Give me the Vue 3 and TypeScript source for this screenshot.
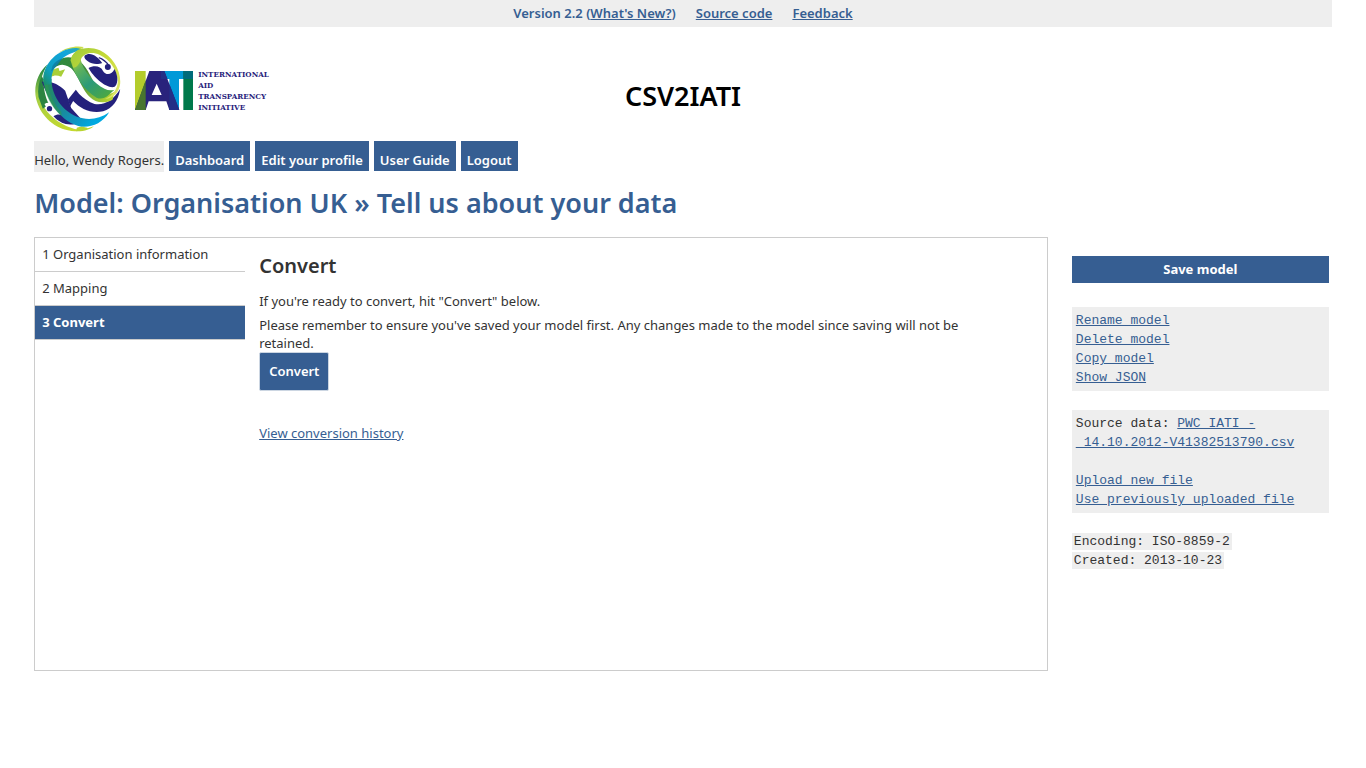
<script setup lang="ts">
interface Link {
  label: string
  href: string
}

const menu: Link[] = [
  { label: 'Dashboard', href: '#dashboard' },
  { label: 'Edit your profile', href: '#profile' },
  { label: 'User Guide', href: '#guide' },
  { label: 'Logout', href: '#logout' },
]

const steps: string[] = ['Organisation information', 'Mapping', 'Convert']
const activeStep = 2

const modelActions: Link[] = [
  { label: 'Rename model', href: '#rename' },
  { label: 'Delete model', href: '#delete' },
  { label: 'Copy model', href: '#copy' },
  { label: 'Show JSON', href: '#json' },
]
</script>

<template>
  <div class="page">
    <div class="version-bar">
      <span>Version 2.2 (<a href="#new">What's New?</a>)</span>
      <a href="#source">Source code</a>
      <a href="#feedback">Feedback</a>
    </div>

    <header class="masthead">
      <div class="logo">
        <svg class="globe" viewBox="12 16 258 261" role="img" aria-label="Globe">
          <defs>
            <linearGradient id="ringA" gradientUnits="userSpaceOnUse" x1="40" y1="130" x2="155" y2="30">
              <stop offset="0" stop-color="#1b8f6a" />
              <stop offset="0.25" stop-color="#0f9fc0" />
              <stop offset="0.7" stop-color="#12a5dc" />
              <stop offset="1" stop-color="#2aa9b0" />
            </linearGradient>
            <linearGradient id="ringB" gradientUnits="userSpaceOnUse" x1="45" y1="120" x2="190" y2="250">
              <stop offset="0" stop-color="#25905a" />
              <stop offset="0.35" stop-color="#1d8580" />
              <stop offset="0.7" stop-color="#1290b8" />
              <stop offset="1" stop-color="#00a9e0" />
            </linearGradient>
            <linearGradient id="ringC" gradientUnits="userSpaceOnUse" x1="70" y1="70" x2="250" y2="175">
              <stop offset="0" stop-color="#2e8b3d" />
              <stop offset="0.4" stop-color="#37853c" />
              <stop offset="0.7" stop-color="#7fb53a" />
              <stop offset="1" stop-color="#bfd730" />
            </linearGradient>
            <linearGradient id="ringD" gradientUnits="userSpaceOnUse" x1="120" y1="60" x2="215" y2="180">
              <stop offset="0" stop-color="#b5d334" />
              <stop offset="0.25" stop-color="#5fb25c" />
              <stop offset="0.6" stop-color="#2c9a78" />
              <stop offset="1" stop-color="#4ba745" />
            </linearGradient>
            <linearGradient id="ringE" gradientUnits="userSpaceOnUse" x1="140" y1="30" x2="268" y2="150">
              <stop offset="0" stop-color="#a6ce39" />
              <stop offset="0.5" stop-color="#cbdc3a" />
              <stop offset="1" stop-color="#dbe56a" />
            </linearGradient>
            <linearGradient id="rim" gradientUnits="userSpaceOnUse" x1="40" y1="80" x2="120" y2="270">
              <stop offset="0" stop-color="#1c8040" />
              <stop offset="0.35" stop-color="#a5cf45" />
              <stop offset="1" stop-color="#c6d92f" />
            </linearGradient>
          </defs>
          <path fill="url(#rim)" d="M52 74C22 98 8 140 17 178C28 224 66 262 112 272C128 276 142 276 150 271C104 266 56 234 36 194C22 160 26 112 52 74Z" />
          <path fill="#2c8441" d="M34 108C24 128 21 150 24 172L37 207L56 194C44 174 40 149 38 118Z" />
          <path fill="#24217c" d="M34 126C60 122 86 134 104 153L122 205L160 247L132 246C91 230 51 175 34 126Z" />
          <path fill="#fff" d="M42 193C57 181 75 198 76 215C91 216 120 223 146 249L128 260C93 255 56 227 42 193Z" />
          <path fill="#24217c" d="M69 230C86 217 118 230 136 252C113 260 86 250 69 230Z" />
          <circle cx="57" cy="207" r="8" fill="#24217c" />
          <path fill="#a9cf38" d="M58 98C64 91 73 86 84 84L87 94L104 89L92 111C80 106 70 106 62 112Z" />
          <path fill="#24217c" d="M112 180L136 150L146 163C158 176 175 187 192 193C222 198 248 182 269 148C263 184 246 206 218 215C182 223 150 208 128 184L119 200Z" />
          <path fill="url(#ringC)" d="M62 84C80 52 118 44 146 64C174 84 186 128 206 152C218 165 236 166 252 156L246 180C222 193 195 190 178 172C150 146 140 92 112 80C94 70 76 76 62 96Z" />
          <path fill="url(#ringB)" d="M38 118L63 118C62 172 104 226 157 236C182 241 211 236 236 218C217 250 184 264 152 261C96 250 46 188 38 118Z" />
          <path fill="#2f9a4d" opacity="0.55" d="M39 122L50 120C54 160 68 190 92 216L94 230C62 204 42 164 39 122Z" />
          <path fill="#b9d432" d="M139 264C151 260 162 261 172 266L190 260C181 269 160 276 137 275Z" />
          <path fill="#c9dc48" d="M84 40C104 24 136 17 160 22L148 30C126 24 104 30 84 40Z" />
          <path fill="url(#ringA)" d="M38 118C40 70 82 28 134 25C145 24 152 28 156 33C116 34 66 66 63 118L62 134L40 136Z" />
          <path fill="#0f7ba0" opacity="0.8" d="M66 78C74 66 84 60 95 56L82 76C76 80 70 86 67 92L62 94Z" />
          <path fill="url(#ringD)" d="M120 62C124 44 138 30 158 26L150 58C158 94 190 132 222 147C232 152 242 153 252 150L230 170C218 178 208 178 198 174C160 152 132 108 120 62Z" />
          <path fill="url(#ringE)" d="M122 56C130 30 168 16 208 32C246 50 272 92 269 132C266 160 248 174 224 178C246 168 262 148 262 124C258 88 238 60 208 46C182 34 158 42 151 60C146 74 138 84 128 84Z" />
          <path fill="#24217c" d="M162 48C179 34 202 50 215 70C204 75 184 75 172 65C165 60 160 54 162 48Z" />
          <path fill="#24217c" d="M174 85C190 75 212 79 217 93C226 108 244 106 252 88C265 112 262 136 251 142C226 147 189 112 174 85Z" />
          <circle cx="232" cy="82" r="9" fill="#24217c" />
          <path fill="#24217c" d="M205 52C218 56 230 66 238 78L230 74C222 66 214 60 205 56Z" />
        </svg>

        <svg class="mark" viewBox="0 0 174 117" role="img" aria-label="IATI">
          <path fill="#b4cc2c" d="M0 0H32V117H0Z" />
          <path fill="#0099d8" d="M78 0H174V24H132V117H103V24H78Z" />
          <path fill="#00794b" d="M145 0H174V117H145Z" />
          <path fill="#006b7a" d="M145 0H174V24H145Z" />
          <path fill="#29237c" fill-rule="evenodd" d="M43 0H88L133 117H103L94 91H41L32 117H0ZM65 38L50 72H80Z" />
          <path fill="#48752e" d="M32 28V117H0Z" />
          <path fill="#232f86" d="M78 0H88L97 24H78ZM103 39L133 117H103Z" />
        </svg>

        <div class="org-name">
          International<br />Aid<br />Transparency<br />Initiative
        </div>
      </div>
      <div class="site-title">CSV2IATI</div>
    </header>

    <nav class="menu">
      <span class="hello">Hello, Wendy Rogers.</span>
      <a v-for="m in menu" :key="m.label" :href="m.href">{{ m.label }}</a>
    </nav>

    <h1>Model: Organisation UK » Tell us about your data</h1>

    <div class="columns">
      <main class="panel">
        <ul class="steps">
          <li v-for="(step, i) in steps" :key="step">
            <a :href="'#step' + (i + 1)" :class="{ active: i === activeStep }">{{ i + 1 }} {{ step }}</a>
          </li>
        </ul>
        <section class="content">
          <h2>Convert</h2>
          <p>If you're ready to convert, hit "Convert" below.</p>
          <p>Please remember to ensure you've saved your model first. Any changes made to the model since saving will not be retained.</p>
          <button type="button" class="convert">Convert</button>
          <a class="history" href="#history">View conversion history</a>
        </section>
      </main>

      <aside class="side">
        <button type="button" class="save">Save model</button>
        <ul class="box">
          <li v-for="a in modelActions" :key="a.label">
            <a :href="a.href">{{ a.label }}</a>
          </li>
        </ul>
        <div class="box">
          Source data: <a href="#csv">PWC_IATI_-<wbr />_14.10.2012-V41382513790.csv</a>
          <ul class="file-actions">
            <li><a href="#upload">Upload new file</a></li>
            <li><a href="#previous">Use previously uploaded file</a></li>
          </ul>
        </div>
        <div class="meta">
          <div><span>Encoding: ISO-8859-2</span></div>
          <div><span>Created: 2013-10-23</span></div>
        </div>
      </aside>
    </div>
  </div>
</template>

<style>
body {
  background: #fff;
}
</style>

<style scoped>
.page {
  width: 95%;
  margin: 0 auto;
  font: 13px/19px "Trebuchet MS", "Noto Sans", "Open Sans", sans-serif;
  color: #333;
}

a {
  color: #365e92;
}

ul {
  list-style: none;
  margin: 0;
  padding: 0;
}

button {
  font: inherit;
  font-weight: 700;
  color: #fff;
  background: #365e92;
  border: 0;
  cursor: pointer;
}

.version-bar {
  display: flex;
  justify-content: center;
  gap: 20px;
  padding: 4px 0;
  background: #eee;
  color: #365e92;
  font-weight: 600;
}

.masthead {
  display: grid;
  grid-template-columns: 1fr auto 1fr;
  align-items: center;
  padding: 18px 0 9px;
}

.logo {
  display: flex;
  align-items: center;
}

.globe {
  width: 87px;
  height: 87px;
  margin-right: 14px;
}

.mark {
  width: 58px;
  height: 39px;
  margin: 4px 5px 0 0;
}

.org-name {
  padding-top: 4px;
  font: 700 8px/11px "DejaVu Serif Condensed", "DejaVu Serif", serif;
  text-transform: uppercase;
  color: #29237c;
}

.site-title {
  padding-top: 14px;
  font-size: 27px;
  line-height: 36px;
  font-weight: 600;
  color: #000;
}

.menu {
  display: flex;
  align-items: flex-start;
  gap: 5px;
}

.menu a {
  padding: 10px 6px 1px;
  background: #365e92;
  color: #fff;
  font-weight: 600;
  text-decoration: none;
}

.hello {
  padding: 10px 0 2px;
  background: #eee;
}

h1 {
  margin: 13px 0 16px;
  font-size: 27px;
  line-height: 36px;
  font-weight: 600;
  color: #365e92;
}

.columns {
  display: grid;
  grid-template-columns: minmax(0, 1fr) 257px;
  gap: 24px;
  padding-right: 3px;
}

.panel {
  display: grid;
  grid-template-columns: 210px minmax(0, 1fr);
  min-height: 432px;
  border: 1px solid #ccc;
}

.steps a {
  display: block;
  padding: 7px;
  border-bottom: 1px solid #ccc;
  color: #333;
  text-decoration: none;
}

.steps .active {
  background: #365e92;
  color: #fff;
  font-weight: 700;
}

.content {
  padding: 14px 40px 0 14px;
}

h2 {
  margin: 0 0 12px;
  font-size: 20px;
  line-height: 28px;
  font-weight: 600;
  color: #333;
}

p {
  margin: 0 0 6px;
  line-height: 18px;
}

p + p {
  margin-bottom: 0;
}

.convert {
  display: block;
  margin-bottom: 33px;
  padding: 9px;
  border: 1px solid #ccd6e2;
  border-radius: 2px;
  font-weight: 600;
}

.side {
  padding-top: 19px;
  font-family: "Liberation Mono", "Courier New", monospace;
}

.save {
  width: 100%;
  margin-bottom: 24px;
  padding: 4px;
  font-family: "Trebuchet MS", "Noto Sans", "Open Sans", sans-serif;
}

.box {
  margin-bottom: 19px;
  padding: 4px;
  background: #eee;
}

.file-actions {
  padding-top: 19px;
}

.meta span {
  padding: 1px 2px;
  background: #eee;
}
</style>
